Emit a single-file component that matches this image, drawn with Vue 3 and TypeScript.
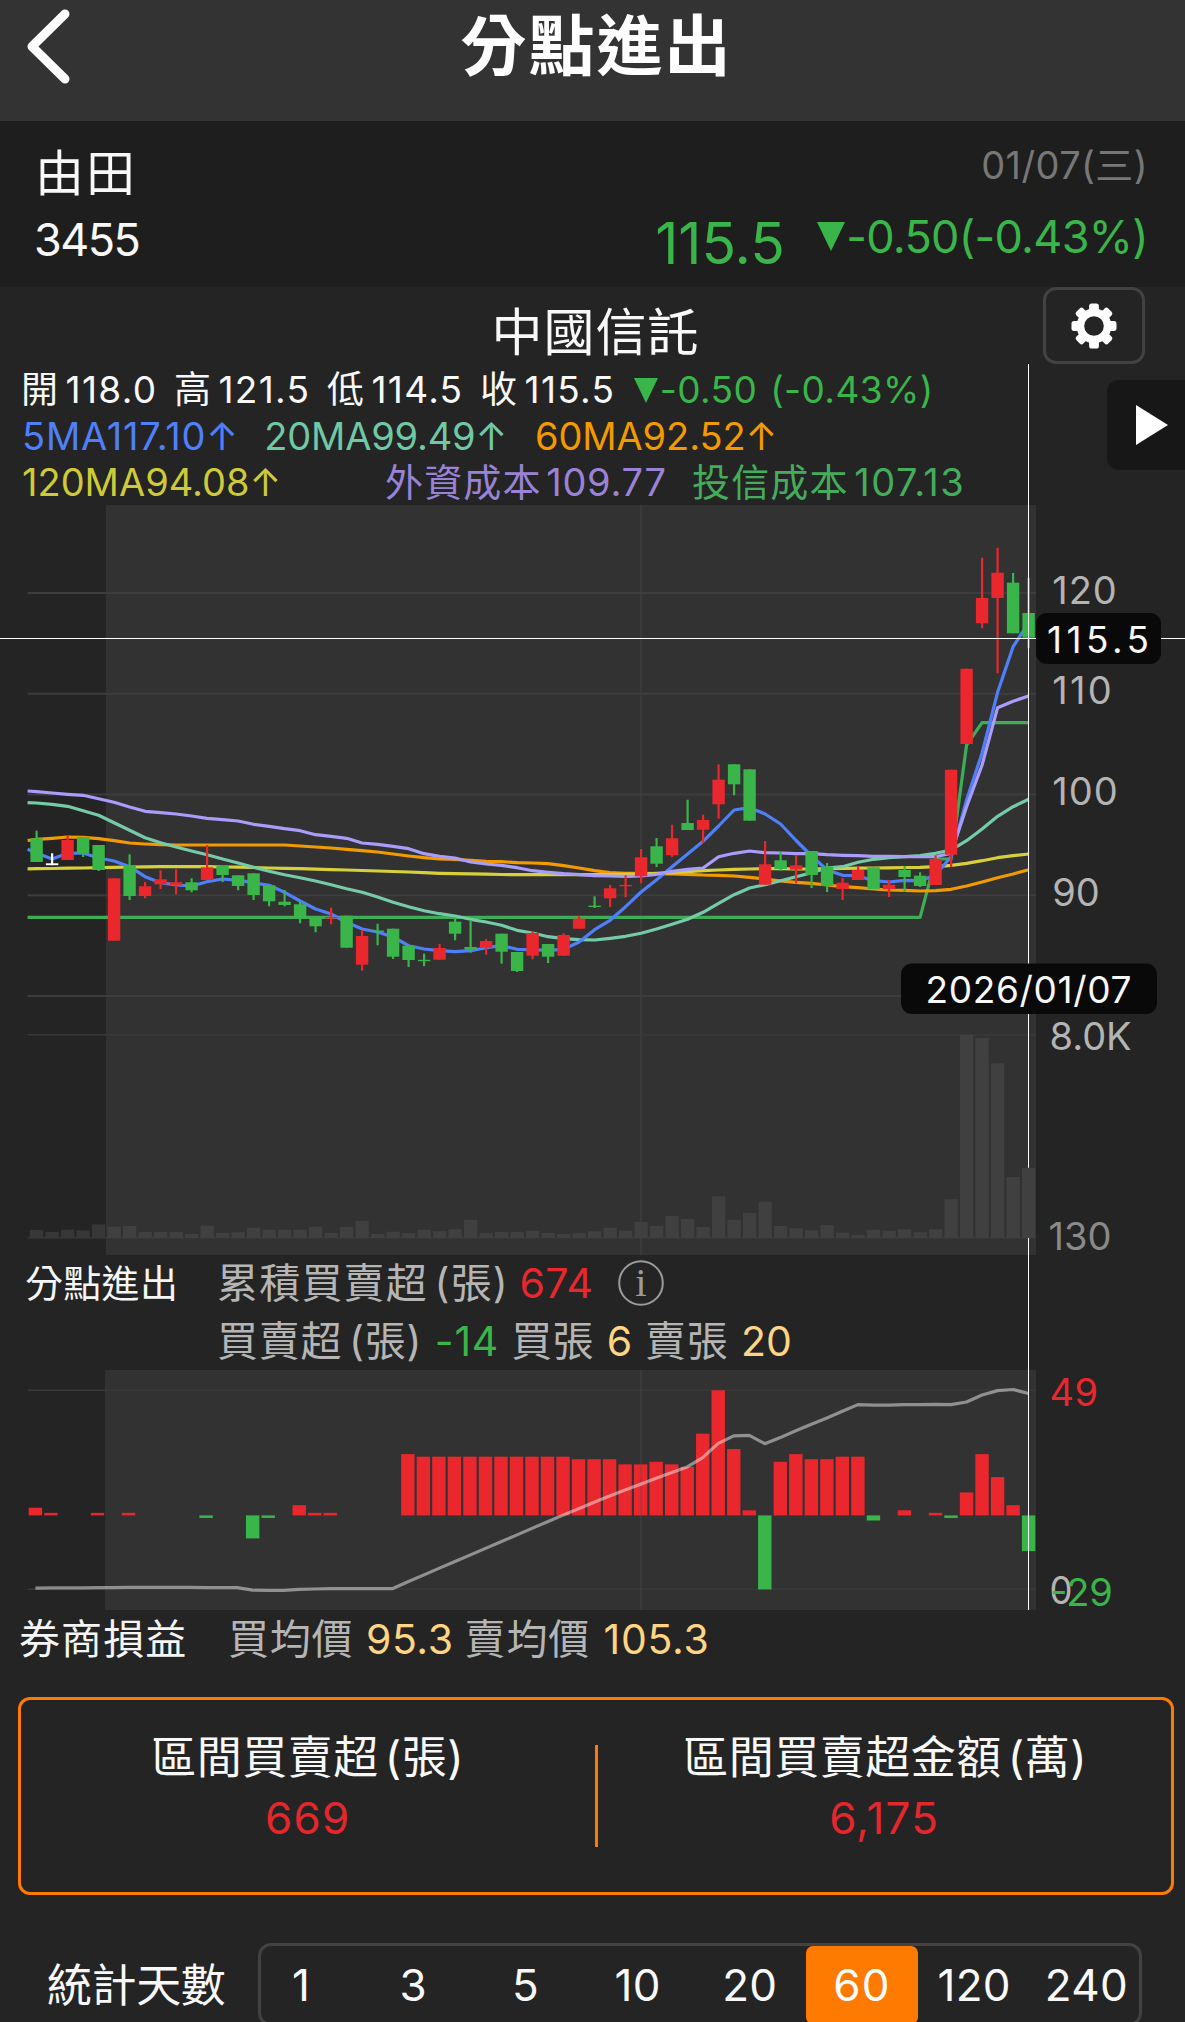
<script setup lang="ts">
type Tone = 'up' | 'down' | 'flat'

interface Candle {
  tone: Tone
  high: number
  top: number
  bottom: number
  low: number
}

// Price and volume bars share one horizontal scale.
const STEP = 15.5
const FIRST = 36.6
const BAR = 12.4
const cx = (i: number): number => FIRST + i * STEP
// The broker panel starts slightly further left.
const nx = (i: number): number => 35.4 + i * 15.519

// The price panel begins at this offset of the page grid.
const PRICE_TOP = 505

const c = (tone: Tone, top: number, bottom: number, high = top, low = bottom): Candle => ({ tone, top, bottom, high, low })

const candles: Candle[] = [
  c('down', 838.3, 862, 830.7), c('flat', 863.3, 865.2, 853.3), c('up', 840, 860, 835.7), c('down', 837, 853, 837, 857),
  c('down', 845, 870, 845, 871), c('up', 878.3, 940.7), c('down', 866, 896, 854.3, 900), c('up', 886.3, 896, 882, 898.3),
  c('up', 879.3, 884.3, 870.3, 889), c('up', 882.3, 885.3, 869.3, 894.3), c('down', 882.3, 890.3, 878.3, 892.3),
  c('up', 867.3, 880, 845), c('down', 866, 875, 866, 882), c('down', 875.3, 886, 875.3, 890.3), c('down', 873.3, 895, 873.3, 900),
  c('down', 885.3, 901.3, 885.3, 906.3), c('down', 901.7, 905, 890, 906.3), c('down', 904.3, 918, 901, 923.3),
  c('down', 917.7, 926.3, 916, 932.3), c('up', 917, 918.6, 907.7, 924.3), c('down', 915.7, 947.7), c('up', 936, 964.7, 930, 970.7),
  c('down', 930.5, 932, 923.7, 945.3), c('down', 928.7, 956.7, 928.7, 959), c('down', 945.7, 960, 945.7, 967),
  c('down', 959.8, 961.2, 953.7, 966), c('up', 948, 959.7, 944), c('down', 921.7, 933.7, 917.7, 940.3), c('down', 947, 949.7, 920, 952.7),
  c('up', 941, 947.7, 939.3, 954.7), c('down', 933.7, 951.7, 933.7, 963.7), c('down', 952, 971, 952, 972),
  c('up', 933, 955.7, 931.3, 959.3), c('down', 944, 956.7, 944, 963), c('up', 935, 955.7, 933.3), c('up', 918.7, 928.7, 915.7),
  c('down', 905.7, 907, 896.3, 908), c('up', 888.3, 898.3, 885, 907), c('up', 884.9, 886.3, 875.3, 897.3),
  c('up', 857.3, 876.3, 849, 883.3), c('down', 846.3, 863.7, 838, 867), c('up', 838.3, 855.3, 824.7, 857), c('down', 823, 830, 799.7),
  c('up', 820, 829.7, 814.7, 843), c('up', 779.7, 804.3, 764.3, 818.7), c('down', 764.3, 784.3, 764.3, 795.3), c('down', 769.3, 820.7),
  c('up', 864.3, 884.7, 841), c('down', 860.3, 869, 852, 870.7), c('up', 865.3, 869.7, 855.3, 883.3), c('down', 851, 875, 851, 888),
  c('down', 866.7, 886, 863, 892), c('up', 882.7, 889, 878, 900), c('up', 870, 880, 866), c('down', 867.3, 889), c('up', 884.7, 889, 880, 897),
  c('down', 870, 877, 866, 892), c('down', 875.7, 886, 872.3, 887), c('up', 859, 885, 855.3), c('up', 769.7, 854.7, 769.7, 867),
  c('up', 668.7, 744), c('up', 598, 623.3, 557.7, 628.3), c('up', 572.7, 598, 547.7, 673.3), c('down', 582.7, 633.3, 573), c('down', 613, 637.7, 578, 648.3),
]

const ma5 = [853, 859, 853.3, 853, 858, 861, 866.7, 876.7, 882.7, 885, 886, 881.7, 879, 880.3, 882.7, 885.3, 892.3, 901, 909, 914, 922.3, 929, 932, 937, 945.7, 949, 950.7, 951.7, 950.7, 947.7, 945.7, 949.3, 949.7, 950.3, 949.3, 942, 929.7, 920.3, 906.7, 892, 879.7, 866.7, 854, 841.3, 826, 810, 807.7, 814, 824, 840.5, 856, 870, 875.3, 875.7, 880.7, 882, 880.3, 880.7, 875, 856.7, 800, 753, 692.3, 646.7, 623]
const ma20 = [803, 804.3, 806.3, 810.7, 815.3, 822.7, 830.3, 837.7, 842.7, 847, 851, 854.7, 859, 863, 867.3, 871.3, 874.7, 877.7, 881, 884.7, 888.7, 892.3, 897, 902.3, 906.7, 910.7, 913.7, 916, 919.3, 922, 925.3, 930.3, 933, 936.7, 938.7, 939.7, 940, 938.3, 936.3, 933.3, 929, 924.3, 919.3, 912.3, 903.3, 894.7, 888, 884.7, 880.7, 876.7, 872.7, 868, 866.7, 862.3, 859.3, 857.7, 856.7, 855.7, 853.3, 850, 840.7, 829, 816.3, 806.7, 799.3]
const ma60 = [839.3, 838.3, 837, 837.3, 838.7, 840.7, 843, 844, 844.7, 845, 845, 845, 845, 845, 845, 845, 845, 846, 847, 848, 849.3, 850.7, 852, 854, 856, 857.7, 859, 859.3, 860.3, 861.3, 861.7, 862.7, 863, 863.7, 865.7, 868, 870.7, 872.7, 873.3, 873.3, 873.7, 874, 874.3, 875, 875.3, 876, 877.3, 879, 881, 882.3, 883.3, 885, 886.7, 887.7, 889, 890, 890.3, 891, 890.7, 889.3, 886, 882, 877.7, 874, 869.7]
const ma120 = [868.7, 868.5, 868.2, 868, 867.7, 867.3, 867, 866.8, 866.7, 866.7, 866.7, 866.7, 867, 867.2, 867.5, 868, 868.3, 868.7, 869.2, 869.6, 870, 870.5, 871, 871.5, 872, 872.7, 873.3, 873.6, 873.9, 874.2, 874.5, 874.7, 874.7, 874.7, 874.7, 874.7, 874.7, 874.5, 874.3, 874, 873.4, 872.7, 871.7, 870.7, 870, 869.3, 869, 868.7, 868.7, 869, 869, 868.7, 868.5, 868.2, 868, 867.8, 867.5, 867.3, 866.7, 865.3, 863.3, 860.7, 857.7, 855.7, 854]
const foreignCost = [791.7, 793, 794.3, 795.3, 798.7, 802.3, 807, 811.3, 812.7, 814, 816, 818.3, 819.7, 821, 824.3, 826.3, 828.7, 830.7, 834.7, 836.3, 838.3, 843, 844.3, 846.3, 848.7, 853.7, 856.3, 858, 862, 864, 865.3, 867.7, 870.7, 872.3, 873.7, 874.7, 875.7, 876, 876.3, 876, 874.3, 871.3, 869.3, 868, 856.7, 853.3, 851, 852.7, 853, 853.7, 853.7, 854.7, 855.3, 855.7, 856.3, 856.3, 856.7, 856.7, 856.7, 853.3, 806.7, 765, 707.7, 701.3, 696]
const trustCost = [...Array<number>(58).fill(917.3), 859, 859, 745, 722.7, 722.7, 722.7, 722.7]

const track = (ys: number[], lead: number): string =>
  `27.6,${(lead - PRICE_TOP).toFixed(1)} ` + ys.map((y, i) => `${cx(i).toFixed(1)},${(y - PRICE_TOP).toFixed(1)}`).join(' ')

const curves = [
  { name: 'trust', points: track(trustCost, 917.3) },
  { name: 'ma60', points: track(ma60, 840.5) },
  { name: 'ma120', points: track(ma120, 868.9) },
  { name: 'ma20', points: track(ma20, 802.7) },
  { name: 'ma5', points: track(ma5, 849.3) },
  { name: 'foreign', points: track(foreignCost, 791) },
]

const volumes = [8, 6, 8.3, 7.7, 13.7, 11.3, 12, 6, 6, 6, 4, 12.3, 5, 5.7, 10.3, 8.3, 8.3, 8.3, 11.3, 5, 11, 17, 4, 6.3, 4.7, 8.3, 6.7, 8.7, 18.3, 4.7, 6, 6, 7.3, 5, 4, 4.7, 6.7, 10.3, 7.3, 16, 12, 22, 19, 11, 41.7, 18.3, 25, 36.3, 12, 9.7, 7.7, 13, 5.3, 3.3, 8.3, 7.3, 8.7, 5.7, 8.7, 38.7, 203, 200, 174.7, 61, 70.3]
const VOLUME_BASE = 1238 - PRICE_TOP

const priceTicks = [
  { y: 88, label: '120', text: 98.5, w: 61 },
  { y: 188.7, label: '110', text: 198.5, w: 56 },
  { y: 289.5, label: '100', text: 299.5, w: 62 },
  { y: 390.3, label: '90', text: 400.5, w: 44 },
  { y: 491, label: '', text: 0, w: 0 },
]

// Daily net lots of the selected broker branch.
const net = [3, 1, 0, 0, 1, 0, 1, 0, 0, 0, 0, -1, 0, 0, -9, -1, 0, 4, 1, 1, 0, 0, 0, 0, 24, 23, 23, 23, 23, 23, 23, 23, 23, 23, 23, 22, 22, 22, 20, 20, 21, 20, 19, 32, 49, 26, 2, -29, 21, 24, 22, 22, 23, 23, -2, 0, 2, 0, 1, -1, 9, 24, 15, 4, -14]
const NET_ZERO = 145.4
const NET_UNIT = 2.553
const netBars = net.map((v, i) => ({
  x: nx(i) - 6.7,
  y: v > 0 ? NET_ZERO - v * NET_UNIT : NET_ZERO,
  h: Math.abs(v) * NET_UNIT,
  tone: v > 0 ? 'up' : 'down',
})).filter((b) => b.h > 0)

let running = 0
const cumulative = net.map((v, i) => {
  running += v
  return `${nx(i).toFixed(1)},${(219 - running * 0.29).toFixed(1)}`
}).join(' ')

const teeth = [0, 45, 90, 135, 180, 225, 270, 315]
const dayOptions = [1, 3, 5, 10, 20, 60, 120, 240]
const activeDays = 60
</script>

<template>
  <main class="screen">
    <header class="topbar">
      <svg class="back" width="48" height="78" viewBox="0 0 48 78"><path d="M43 6 10 38.5 43 71" /></svg>
      <h1>分點進出</h1>
    </header>

    <section class="stock">
      <div class="identity">
        <div class="name">由田</div>
        <div class="code">3455</div>
      </div>
      <div class="quote">
        <div class="date">01/07(三)</div>
        <div class="figures">
          <span class="last">115.5</span>
          <svg class="drop" width="28" height="29" viewBox="0 0 28 29"><path d="M0 0H28L14 29Z" /></svg>
          <span class="change">-0.50(-0.43%)</span>
        </div>
      </div>
    </section>

    <section class="broker">
      <h2>中國信託</h2>
      <div class="legend ohlc">
        <span class="k">開</span><span class="v">118.0</span>
        <span class="k">高</span><span class="v">121.5</span>
        <span class="k">低</span><span class="v">114.5</span>
        <span class="k">收</span><span class="v">115.5</span>
        <svg class="fall" width="24" height="25" viewBox="0 0 24 25"><path d="M0 0H24L12 25Z" /></svg>
        <span class="delta">-0.50</span><span class="delta pct">(-0.43%)</span>
      </div>
      <div class="legend">
        <span class="t5">5MA117.10↑</span><span class="t20">20MA99.49↑</span><span class="t60">60MA92.52↑</span>
      </div>
      <div class="legend">
        <span class="t120">120MA94.08↑</span>
        <span class="tf">外資成本</span><span class="tf num">109.77</span>
        <span class="tt">投信成本</span><span class="tt num">107.13</span>
      </div>
      <button class="settings" type="button">
        <svg width="46" height="46" viewBox="-23 -23 46 46">
          <circle r="13.6" class="ring" />
          <rect v-for="a in teeth" :key="a" x="-4.9" y="-22.5" width="9.8" height="9" rx="2.6" :transform="`rotate(${a})`" />
        </svg>
      </button>
      <div class="drawer">
        <svg width="32" height="40" viewBox="0 0 32 40"><path d="M0 0 32 20 0 40Z" /></svg>
      </div>
      <i class="cursor cursor-top"></i>
    </section>

    <svg class="panel" width="1185" height="750" viewBox="0 0 1185 750">
      <rect class="range" x="106" y="0" width="930" height="750" />
      <rect class="grid-v" x="640" y="0" width="2" height="750" />
      <rect v-for="t in priceTicks" :key="t.y" class="grid" x="27.6" :y="t.y - 1" width="1008.4" height="2" />
      <rect class="grid faint" x="27.6" y="529" width="1008.4" height="1.5" />
      <rect class="grid faint" x="27.6" y="732" width="1008.4" height="1.5" />
      <polyline v-for="l in curves" :key="l.name" class="curve" :class="l.name" :points="l.points" />
      <g v-for="(k, i) in candles" :key="i" :class="k.tone">
        <rect :x="cx(i) - 1.1" :y="k.high - PRICE_TOP" width="2.2" :height="k.low - k.high" />
        <rect :x="cx(i) - BAR / 2" :y="k.top - PRICE_TOP" :width="BAR" :height="k.bottom - k.top" />
      </g>
      <rect class="cross" x="1028" y="0" width="1" height="750" />
      <rect class="cross" x="0" y="133" width="1185" height="1" />
      <rect
        v-for="(v, i) in volumes" :key="'v' + i" class="volume" :class="{ outside: i < 5 }"
        :x="cx(i) - 6.7" :y="VOLUME_BASE - v" width="13.4" :height="v"
      />
      <g class="axis">
        <text v-for="t in priceTicks.slice(0, 4)" :key="t.label" x="1052.3" :y="t.text" :textLength="t.w + 3.5">{{ t.label }}</text>
        <text x="1049.5" y="545">8.0K</text>
        <text class="dim" x="1048.5" y="744.7">130</text>
      </g>
      <rect class="tag" x="1036" y="108" width="125" height="51" rx="11" />
      <text class="tag-text" x="1047" y="147.7" textLength="102">115.5</text>
      <rect class="tag" x="901" y="458.5" width="256" height="50.5" rx="11" />
      <text class="tag-text" x="925.5" y="498" textLength="206">2026/01/07</text>
    </svg>

    <section class="flow">
      <h3>分點進出</h3>
      <div class="stats">
        <div class="stat">
          <span>累積買賣超</span><span class="paren">(張)</span><span class="red">674</span>
          <svg class="info" width="46" height="46" viewBox="0 0 46 46">
            <circle cx="23" cy="23" r="21.8" />
            <text x="23" y="36" text-anchor="middle">i</text>
          </svg>
        </div>
        <div class="stat">
          <span>買賣超</span><span class="paren">(張)</span><span class="green">-14</span>
          <span class="s1">買張</span><span class="gold">6</span>
          <span class="s2">賣張</span><span class="gold g2">20</span>
        </div>
      </div>
      <i class="cursor"></i>
    </section>

    <svg class="panel" width="1185" height="240" viewBox="0 0 1185 240">
      <rect class="range" x="105" y="0" width="931" height="240" />
      <rect class="grid faint" x="27.6" y="19.5" width="1008.4" height="1.5" />
      <rect class="grid faint" x="27.6" y="218.5" width="1008.4" height="1.5" />
      <rect v-for="b in netBars" :key="b.x" :class="b.tone" :x="b.x" :y="b.y" width="13.4" :height="b.h" />
      <rect class="grid-v" x="640" y="0" width="2" height="240" />
      <polyline class="curve total" :points="cumulative" />
      <rect class="cross" x="1028" y="0" width="1" height="240" />
      <g class="axis">
        <text class="red" x="1049.5" y="35.5">49</text>
        <text x="1049.5" y="234" textLength="23" lengthAdjust="spacingAndGlyphs">0</text>
        <text class="green" x="1050" y="235.6">-29</text>
      </g>
    </svg>

    <section class="profit">
      <h3>券商損益</h3>
      <span class="p1">買均價</span><span class="gold">95.3</span>
      <span class="p2">賣均價</span><span class="gold g3">105.3</span>
    </section>

    <section class="summary">
      <div class="cell">
        <div class="label">區間買賣超<span>(張)</span></div>
        <div class="value">669</div>
      </div>
      <div class="split"></div>
      <div class="cell">
        <div class="label">區間買賣超金額<span>(萬)</span></div>
        <div class="value">6,175</div>
      </div>
    </section>

    <section class="days">
      <span class="days-label">統計天數</span>
      <div class="segments">
        <div class="strip">
          <button v-for="d in dayOptions" :key="d" type="button" :class="{ active: d === activeDays }">{{ d }}</button>
        </div>
      </div>
    </section>
  </main>
</template>

<style>
body {
  background: #242424;
}
</style>

<style scoped>
.screen {
  width: 1185px;
  height: 2022px;
  overflow: hidden;
  display: flex;
  flex-direction: column;
  background: #242424;
  color: #f8f8f8;
  font-family: Inter, "Noto Sans CJK TC", sans-serif;
  font-weight: 400;
  white-space: nowrap;
}
.screen > * { flex: none; }
h1, h2, h3 { margin: 0; font-weight: 400; }
button { font: inherit; color: inherit; padding: 0; border: 0; background: none; }
svg { display: block; flex: none; overflow: visible; }

.topbar {
  display: grid;
  grid-template-columns: 1fr auto 1fr;
  height: 121px;
  background: #333;
  color: #fff;
}
.back { margin: 8px 0 0 21.5px; fill: none; stroke: #fff; stroke-width: 9; stroke-linecap: round; stroke-linejoin: round; }
.topbar h1 { font-size: 66px; font-weight: 700; line-height: 93px; letter-spacing: 2px; margin-left: 8px; }

.stock {
  display: flex;
  justify-content: space-between;
  height: 166px;
  background: #1e1e1e;
}
.identity { padding: 20px 0 0 35px; line-height: 66px; }
.name { font-size: 49px; letter-spacing: 2px; }
.code { font-size: 45px; letter-spacing: -1.6px; margin-left: -1px; }
.quote { padding: 20px 37px 0 0; }
.date { font-size: 38px; line-height: 49px; letter-spacing: 0.4px; text-align: right; color: #777; }
.figures { display: flex; align-items: flex-start; color: #3ab54a; line-height: 60px; }
.last { font-size: 57px; margin-top: 23.5px; }
.drop { margin: 32px 1.4px 0 32px; fill: #3ab54a; }
.change { font-size: 45px; letter-spacing: -0.7px; margin-top: 16.5px; }

.broker { position: relative; height: 218px; }
.broker h2 { height: 79px; line-height: 91px; font-size: 51px; letter-spacing: 1px; text-align: center; margin-left: 6px; }
.legend { display: flex; height: 46px; line-height: 46px; padding-left: 22px; font-size: 38px; }
.ohlc { height: 47px; line-height: 47px; padding-left: 21px; font-size: 37px; }
.k { margin-left: 16.6px; }
.k:first-child { margin-left: 0; }
.v { letter-spacing: 1.3px; margin-left: 7.6px; }
.fall { margin: 12px 2px 0 18.5px; fill: #3ab54a; }
.delta { color: #3ab54a; letter-spacing: 0.4px; }
.pct { margin-left: 13px; }
.t5 { color: #4f80fa; letter-spacing: 0.8px; }
.t20 { color: #70c9a5; margin-left: 25.5px; letter-spacing: -0.2px; }
.t60 { color: #f29a00; margin-left: 28px; letter-spacing: -0.1px; }
.t120 { color: #cfca38; letter-spacing: 0; }
.tf { color: #9a83d6; margin-left: 103.8px; letter-spacing: 1.2px; }
.tf.num { margin-left: 4.5px; letter-spacing: 0.7px; }
.tt { color: #43ad5b; margin-left: 25.3px; letter-spacing: 1.2px; }
.tt.num { margin-left: 5.5px; letter-spacing: 1.5px; }
.settings {
  position: absolute;
  top: 0;
  left: 1043px;
  width: 102px;
  height: 77px;
  box-sizing: border-box;
  display: flex;
  align-items: center;
  justify-content: center;
  border: 3px solid #424242;
  border-radius: 13px;
}
.settings svg { fill: #fff; }
.settings .ring { fill: none; stroke: #fff; stroke-width: 7.6; }
.drawer {
  position: absolute;
  top: 93px;
  right: 0;
  width: 78px;
  height: 90px;
  box-sizing: border-box;
  padding: 25px 0 0 29px;
  background: #171717;
  border-radius: 12px 0 0 12px;
}
.drawer svg { fill: #fff; }
.cursor { position: absolute; left: 1028px; top: 0; bottom: 0; width: 1px; background: #fff; }
.cursor-top { top: 77px; }

.range { fill: #323232; }
.grid { fill: #3d3d3d; }
.faint { fill: #383838; }
.grid-v { fill: #505050; fill-opacity: 0.3; }
.volume { fill: #404040; }
.volume.outside { fill: #373737; }
.cross { fill: #fff; }
.up { fill: #ea272d; }
.down { fill: #3ab54a; }
.flat { fill: #fff; }
.curve { fill: none; stroke-width: 3.2; stroke-linejoin: round; }
.ma5 { stroke: #4f80fa; }
.ma20 { stroke: #75cba8; }
.ma60 { stroke: #f29a00; }
.ma120 { stroke: #d6d03c; }
.foreign { stroke: #aa9cfa; }
.trust { stroke: #3fad57; }
.total { stroke: #fff; stroke-opacity: 0.46; }
.axis text { font-size: 38px; fill: #b4b4b4; }
.axis .dim { fill: #8a8a8a; }
.axis .red { fill: #ea272d; }
.axis .green { fill: #3ab54a; }
.tag { fill: #090909; }
.tag-text { font-size: 37px; fill: #f8f8f8; }

.flow { position: relative; display: flex; height: 115px; color: #b5b5b5; }
.flow h3 { width: 193px; padding-left: 25px; font-size: 38px; line-height: 57px; letter-spacing: 0.3px; color: #f5f5f5; box-sizing: border-box; }
.stats { padding-left: 24px; }
.stat { display: flex; font-size: 41px; line-height: 57px; height: 57px; letter-spacing: 1.2px; }
.stat + .stat { line-height: 58px; height: 58px; letter-spacing: 0.8px; }
.paren { margin-left: 6.5px; }
.red { color: #ea272d; margin-left: 10.5px; letter-spacing: 0.38px; }
.green { color: #3ab54a; margin-left: 12.5px; }
.gold { color: #fdd584; margin-left: 13px; }
.s1 { margin-left: 12px; letter-spacing: 0.3px; }
.s2 { margin-left: 12px; }
.g2 { margin-left: 12.3px; letter-spacing: 0; }
.info { margin: 5px 0 0 25px; fill: none; stroke: #9b9b9b; stroke-width: 2; }
.info text { font-family: "Liberation Serif", serif; font-size: 41px; letter-spacing: 0; fill: #9b9b9b; stroke: none; }

.profit { display: flex; height: 87px; line-height: 58px; font-size: 41px; color: #b5b5b5; }
.profit h3 { padding-left: 19px; font-size: 41px; letter-spacing: 1.1px; color: #f5f5f5; }
.p1 { margin-left: 40.6px; letter-spacing: 0.8px; }
.p2 { margin-left: 11px; letter-spacing: 0.8px; }
.profit .gold { margin-left: 12.5px; letter-spacing: 0.6px; }
.profit .g3 { margin-left: 13.6px; letter-spacing: 0.71px; }

.summary {
  display: flex;
  margin: 0 11px 0 18px;
  height: 198px;
  box-sizing: border-box;
  padding-top: 28px;
  border: 3px solid #ff7a00;
  border-radius: 12px;
  text-align: center;
}
.cell { flex: 1; line-height: 60px; }
.label { font-size: 45px; letter-spacing: 0.5px; }
.label span { margin-left: 6px; }
.cell:last-child .label { margin-left: 2px; }
.value { margin-top: 0; font-size: 44px; letter-spacing: 1.2px; color: #e3272d; }
.split { width: 3px; height: 102px; margin-top: 17px; background: #ff7a00; }

.days { display: flex; padding: 48px 0 0 47px; }
.days-label { width: 211px; font-size: 45px; line-height: 85px; letter-spacing: -0.4px; }
.segments { width: 884px; height: 83px; box-sizing: border-box; border: 3px solid #424242; border-radius: 13px; }
.strip { display: grid; grid-template-columns: repeat(8, 112.2px); margin-left: -16px; height: 77px; }
.strip button { font-size: 44px; line-height: 78px; letter-spacing: 0.3px; text-align: center; }
.strip .active { background: #ff7a00; border-radius: 7px; color: #fff; letter-spacing: 1.2px; }
</style>
